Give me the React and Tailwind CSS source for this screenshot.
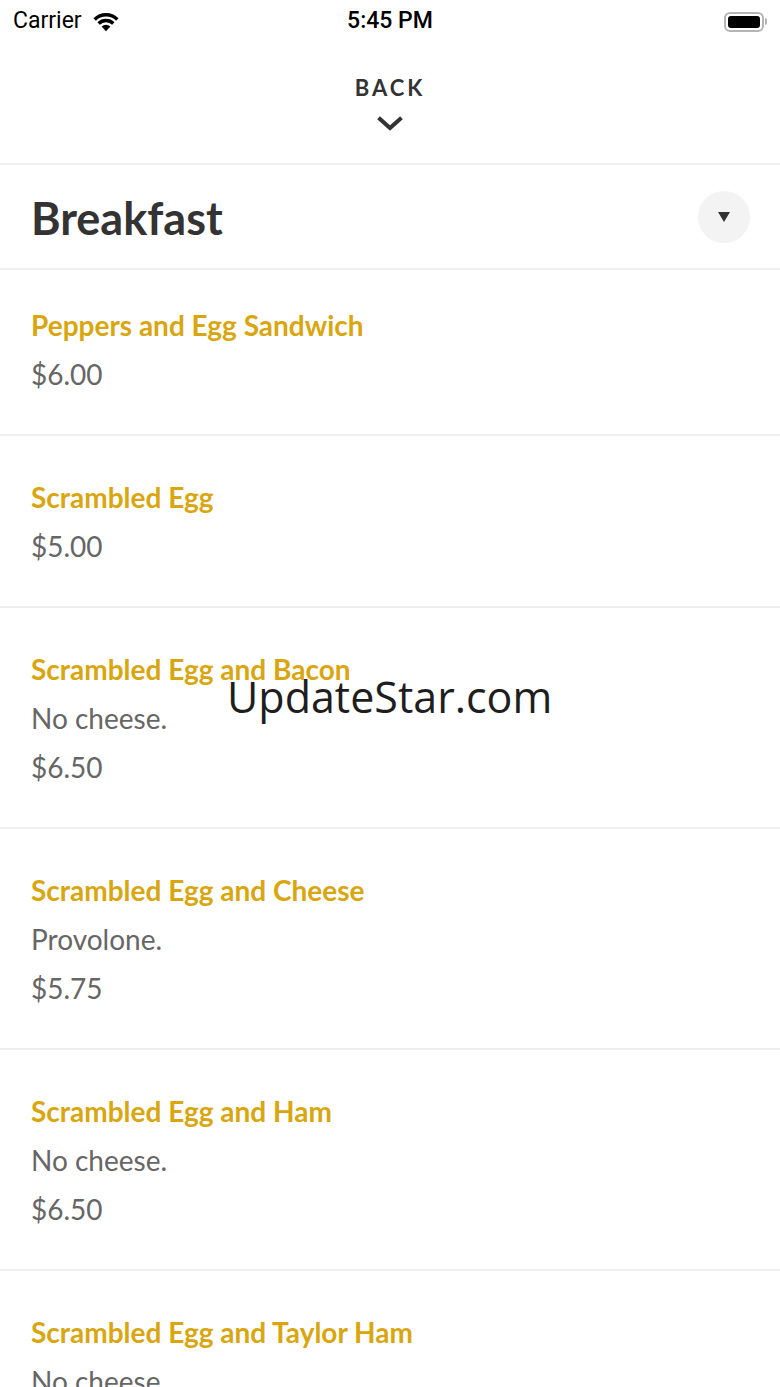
import React from 'react';

const items = [
  { name: 'Peppers and Egg Sandwich', price: '$6.00', first: true },
  { name: 'Scrambled Egg', price: '$5.00' },
  { name: 'Scrambled Egg and Bacon', note: 'No cheese.', price: '$6.50' },
  { name: 'Scrambled Egg and Cheese', note: 'Provolone.', price: '$5.75' },
  { name: 'Scrambled Egg and Ham', note: 'No cheese.', price: '$6.50' },
  { name: 'Scrambled Egg and Taylor Ham', note: 'No cheese.', price: '$6.50' },
];

const StatusBar = () => (
  <div className="relative flex h-[40px] items-center justify-between px-[13px] pt-[3px] font-['Roboto','Liberation_Sans',sans-serif] text-[23px] text-black">
    <div className="flex items-center gap-[9px]">
      <span>Carrier</span>
      <svg width="30" height="24" viewBox="0 0 26 20">
        <path d="M13 18 L9.2 14 A5.5 5.5 0 0 1 16.8 14 Z" fill="#000" />
        <path d="M6.6 11.3 A9.2 9.2 0 0 1 19.4 11.3" stroke="#000" strokeWidth="3" fill="none" />
        <path d="M3.2 7.8 A14 14 0 0 1 22.8 7.8" stroke="#000" strokeWidth="3" fill="none" />
      </svg>
    </div>
    <span className="absolute left-1/2 -translate-x-1/2 font-medium">5:45 PM</span>
    <div className="flex items-center">
      <div className="flex h-[20px] w-[40px] items-center rounded-[6px] border-[2px] border-[#b5b5b5] p-[2px]">
        <div className="h-full w-full rounded-[3px] bg-black" />
      </div>
      <div className="ml-[1px] h-[7px] w-[2px] rounded-r-[2px] bg-[#b5b5b5]" />
    </div>
  </div>
);

const Item = ({ item }) => (
  <div className={`border-t-[2px] border-[#f0f0f0] px-[31px] pb-[35px] ${item.first ? 'pt-[31px]' : 'pt-[37px]'}`}>
    <div className="text-[28px] font-bold leading-[49px] text-[#d9a610]">{item.name}</div>
    {item.note && <div className="text-[28px] leading-[49px] text-[#666]">{item.note}</div>}
    <div className="text-[28px] leading-[49px] text-[#666]">{item.price}</div>
  </div>
);

export default function App() {
  return (
    <div className="relative h-[1387px] w-[780px] overflow-hidden bg-white font-['Lato','Noto_Sans',sans-serif]">
      <StatusBar />
      <div className="flex h-[123px] flex-col items-center pt-[33px]">
        <span className="text-[22px] font-bold leading-[30px] tracking-[3px] text-[#333]">BACK</span>
        <svg className="mt-[13px]" width="26" height="16" viewBox="0 0 26 16">
          <path d="M3 3 L13 12 L23 3" stroke="#333" strokeWidth="4" fill="none" strokeLinecap="square" />
        </svg>
      </div>
      <div className="flex h-[105px] items-center justify-between border-t-[2px] border-[#f0f0f0] pl-[31px] pr-[30px]">
        <h1 className="pt-[4px] text-[45px] font-bold leading-none text-[#333]">Breakfast</h1>
        <div className="flex h-[52px] w-[52px] items-center justify-center rounded-full bg-[#f3f3f3]">
          <svg width="12" height="10" viewBox="0 0 12 10">
            <path d="M0 0 H12 L6 10 Z" fill="#333" />
          </svg>
        </div>
      </div>
      {items.map((item) => (
        <Item key={item.name} item={item} />
      ))}
      <div className="pointer-events-none absolute left-[227px] top-[669px] font-['Open_Sans',sans-serif] text-[43px] leading-[56px] text-[#1e1e1e]">
        UpdateStar.com
      </div>
    </div>
  );
}
